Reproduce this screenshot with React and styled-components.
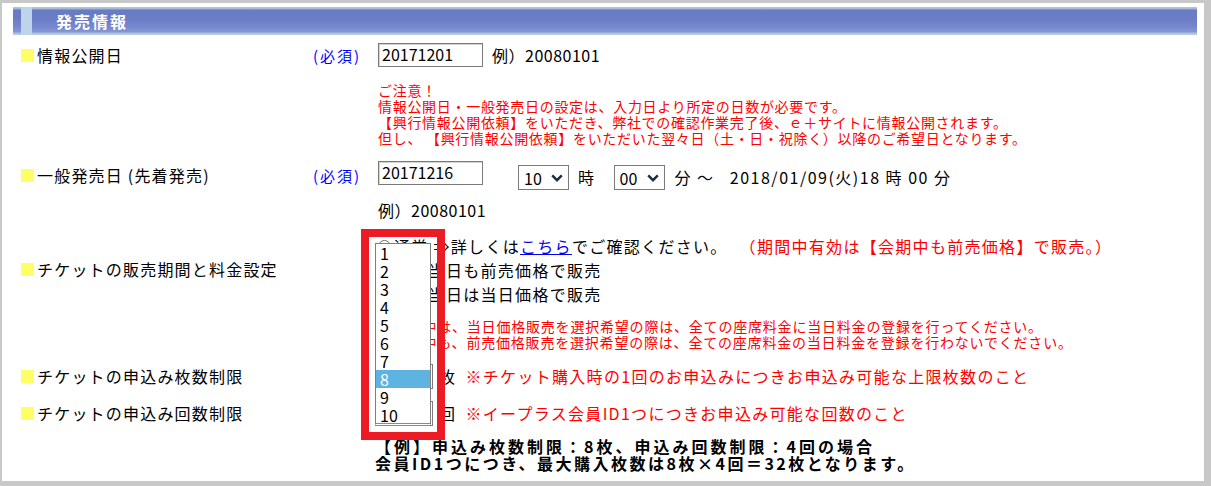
import React from 'react';
import styled, { createGlobalStyle, css } from 'styled-components';

const GlobalStyle = createGlobalStyle`
  html, body {
    margin: 0;
    padding: 0;
    background: #c8c8c8;
  }
  body {
    font-family: "Noto Sans CJK JP", "Noto Sans", sans-serif;
    color: #000;
  }
  #root {
    padding: 3px 7px 5px 2px;
  }
`;

const Panel = styled.div`
  position: relative;
  box-sizing: border-box;
  height: 478px;
  padding-top: 4px;
  background: #fff;
  overflow: hidden;
`;

const SectionHeader = styled.div`
  display: flex;
  align-items: stretch;
  height: 28px;
  margin: 0 7px 0 11px;
  background: linear-gradient(
    to bottom,
    #b9cad6 0px,
    #a2b5cb 2px,
    #6a7bc6 3px,
    #6b7cc7 12px,
    #7788cf 20px,
    #8696d7 25px,
    #a8c0d6 26px,
    #bdd2e2 28px
  );
`;

const HeaderAccent = styled.span`
  width: 11px;
  margin-left: 8px;
  background: #bcd5ec;
`;

const HeaderTitle = styled.h2`
  align-self: center;
  margin: 0 0 0 24px;
  color: #fff;
  font-size: 16px;
  font-weight: 700;
  letter-spacing: 2px;
  line-height: 20px;
`;

const Row = styled.div`
  display: grid;
  grid-template-columns: 292px 65px 1fr;
  align-items: start;
  margin-top: ${p => p.$gap}px;
  padding-left: 19px;
`;

const Label = styled.div`
  display: flex;
  align-items: center;
  height: ${p => p.$h || 24}px;
  margin-top: ${p => p.$offset || 0}px;
  font-size: 16px;
  letter-spacing: 1.2px;
  white-space: pre;
`;

const Mark = styled.span`
  flex: none;
  width: 13px;
  height: 13px;
  margin-right: 3px;
  background: #ffff66;
`;

const Required = styled.div`
  display: flex;
  align-items: center;
  height: ${p => p.$h || 24}px;
  color: #0000ff;
  font-size: 15px;
  letter-spacing: 2px;
  white-space: nowrap;
`;

const Value = styled.div`
  min-width: 0;
`;

const Line = styled.div`
  display: flex;
  align-items: ${p => (p.$top ? 'flex-start' : 'center')};
  height: ${p => p.$h || 24}px;
  margin-top: ${p => p.$mt || 0}px;
  font-size: 16px;
  letter-spacing: ${p => p.$ls ?? 0.5}px;
  white-space: nowrap;
`;

const TextInput = styled.input`
  box-sizing: border-box;
  width: 105px;
  height: 24px;
  margin: 0;
  padding: 0 3px 2px;
  border: 1px solid #7a7a7a;
  box-shadow: inset 1px 1px 0 #d4d4d4;
  background: #fff;
  color: #000;
  font-family: "Noto Sans CJK JP", sans-serif;
  font-size: 16px;
  outline: none;
`;

const Hint = styled.span`
  margin-left: ${p => p.$ml || 0}px;
`;

const SelectBox = styled.div`
  display: inline-flex;
  align-items: center;
  justify-content: space-between;
  box-sizing: border-box;
  width: ${p => p.$w}px;
  height: 25px;
  margin-top: ${p => p.$mt || 0}px;
  margin-left: ${p => p.$ml || 0}px;
  padding: 0 5px 0 5px;
  border: 1px solid #7a7a7a;
  background: #fff;
  font-size: 16px;
  letter-spacing: 0;
`;

const Unit = styled.span`
  display: inline-block;
  height: 25px;
  line-height: 25px;
  margin-top: ${p => p.$mt || 0}px;
  margin-left: ${p => p.$ml || 0}px;
  letter-spacing: ${p => p.$ls ?? 0.5}px;
  white-space: pre;
`;

const Notice = styled.div`
  margin-top: ${p => p.$mt || 0}px;
  color: #ff0000;
  font-size: 14px;
  line-height: 16px;
  letter-spacing: ${p => p.$ls ?? 0.7}px;
  white-space: nowrap;
`;

const RedText = styled.span`
  margin-left: ${p => p.$ml || 0}px;
  color: #ff0000;
  letter-spacing: ${p => p.$ls ?? 1}px;
`;

const Radio = styled.span`
  flex: none;
  box-sizing: border-box;
  width: 13px;
  height: 13px;
  margin-right: 3px;
  border: 1px solid #6f6f6f;
  border-radius: 50%;
  background: #fff;
  ${p =>
    p.$checked &&
    css`
      background: radial-gradient(circle, #333 0 2.5px, #fff 3px);
    `}
`;

const Link = styled.a`
  color: #0000ee;
  text-decoration: underline;
`;

const ExampleNote = styled.div`
  margin-left: -3px;
  font-size: 16px;
  font-weight: 700;
  line-height: 17px;
  white-space: nowrap;
`;

const ExampleLine = styled.div`
  letter-spacing: ${p => p.$ls}px;
`;

const OptionList = styled.ul`
  position: absolute;
  left: 373px;
  top: 240px;
  box-sizing: border-box;
  width: 56px;
  height: 183px;
  margin: 0;
  padding: 0;
  list-style: none;
  background: #fff;
  border: 1px solid #7f7f7f;
  border-bottom: 3px double #8a8a8a;
`;

const Option = styled.li`
  height: 18px;
  padding-left: 4px;
  font-size: 16px;
  line-height: 18px;
  color: ${p => (p.$selected ? '#fff' : '#000')};
  background: ${p => (p.$selected ? '#5fb3e1' : 'transparent')};
`;

const Annotation = styled.div`
  position: absolute;
  left: 359px;
  top: 226px;
  box-sizing: border-box;
  width: 84px;
  height: 211px;
  border: 8px solid #ed1c24;
  pointer-events: none;
`;

const Chevron = () => (
  <svg width="12" height="8" viewBox="0 0 12 8">
    <path d="M1.2 1.4 L6 6.2 L10.8 1.4" fill="none" stroke="#1c2947" strokeWidth="2.4" />
  </svg>
);

const FakeSelect = ({ value, w, ml, mt }) => (
  <SelectBox $w={w} $ml={ml} $mt={mt}>
    <span>{value}</span>
    <Chevron />
  </SelectBox>
);

const FieldLabel = ({ children, h, offset }) => (
  <Label $h={h} $offset={offset}>
    <Mark />
    {children}
  </Label>
);

const options = ['1', '2', '3', '4', '5', '6', '7', '8', '9', '10'];

export default function App() {
  return (
    <>
      <GlobalStyle />
      <Panel>
        <SectionHeader>
          <HeaderAccent />
          <HeaderTitle>発売情報</HeaderTitle>
        </SectionHeader>

        <Row $gap={8}>
          <FieldLabel>情報公開日</FieldLabel>
          <Required>(必須)</Required>
          <Value>
            <Line>
              <TextInput defaultValue="20171201" readOnly />
              <Hint $ml={9}>例）20080101</Hint>
            </Line>
            <Notice $mt={15}>
              ご注意！
              <br />
              情報公開日・一般発売日の設定は、入力日より所定の日数が必要です。
              <br />
              【興行情報公開依頼】をいただき、弊社での確認作業完了後、ｅ＋サイトに情報公開されます。
              <br />
              但し、 【興行情報公開依頼】をいただいた翌々日（土・日・祝除く）以降のご希望日となります。
            </Notice>
          </Value>
        </Row>

        <Row $gap={15}>
          <FieldLabel h={28}>{'一般発売日 (先着発売)'}</FieldLabel>
          <Required $h={28}>(必須)</Required>
          <Value>
            <Line $top $h={29}>
              <TextInput defaultValue="20171216" readOnly />
              <FakeSelect value="10" w={51} ml={35} mt={4} />
              <Unit $mt={4} $ml={9}>時</Unit>
              <FakeSelect value="00" w={51} ml={19} mt={4} />
              <Unit $mt={4} $ml={10} $ls={1.5}>分 ～   2018/01/09(火)18 時 00 分</Unit>
            </Line>
            <Line $h={20} $mt={10}>
              例）20080101
            </Line>
          </Value>
        </Row>

        <Row $gap={14}>
          <FieldLabel offset={23}>チケットの販売期間と料金設定</FieldLabel>
          <div />
          <Value>
            <Line $ls={1.3}>
              <Radio $checked />
              通常 ⇒詳しくは<Link>こちら</Link>でご確認ください。
              <RedText $ml={12} $ls={1.3}>（期間中有効は【会期中も前売価格】で販売。）</RedText>
            </Line>
            <Line $ls={1.3}>
              <Radio />
              会期当日も前売価格で販売
            </Line>
            <Line $ls={1.3}>
              <Radio />
              会期当日は当日価格で販売
            </Line>
            <Notice $mt={12} $ls={0.8}>
              ※会期中は、当日価格販売を選択希望の際は、全ての座席料金に当日料金の登録を行ってください。
              <br />
              ※会期中も、前売価格販売を選択希望の際は、全ての座席料金の当日料金を登録を行わないでください。
            </Notice>
          </Value>
        </Row>

        <Row $gap={14}>
          <FieldLabel>チケットの申込み枚数制限</FieldLabel>
          <div />
          <Value>
            <Line $top $ls={1.3}>
              <FakeSelect value="8" w={55} />
              <Unit $ml={6}>枚</Unit>
              <RedText $ml={10} $ls={1.3}>※チケット購入時の1回のお申込みにつきお申込み可能な上限枚数のこと</RedText>
            </Line>
          </Value>
        </Row>

        <Row $gap={13}>
          <FieldLabel>チケットの申込み回数制限</FieldLabel>
          <div />
          <Value>
            <Line $top $ls={1.3}>
              <FakeSelect value="4" w={55} />
              <Unit $ml={6}>回</Unit>
              <RedText $ml={10} $ls={1.3}>※イープラス会員ID1つにつきお申込み可能な回数のこと</RedText>
            </Line>
          </Value>
        </Row>

        <Row $gap={13}>
          <div />
          <div />
          <ExampleNote>
            <ExampleLine $ls={3}>【例】申込み枚数制限：8枚、申込み回数制限：4回の場合</ExampleLine>
            <ExampleLine $ls={2.5}>会員ID1つにつき、最大購入枚数は8枚×4回＝32枚となります。</ExampleLine>
          </ExampleNote>
        </Row>

        <OptionList>
          {options.map(o => (
            <Option key={o} $selected={o === '8'}>
              {o}
            </Option>
          ))}
        </OptionList>
        <Annotation />
      </Panel>
    </>
  );
}
